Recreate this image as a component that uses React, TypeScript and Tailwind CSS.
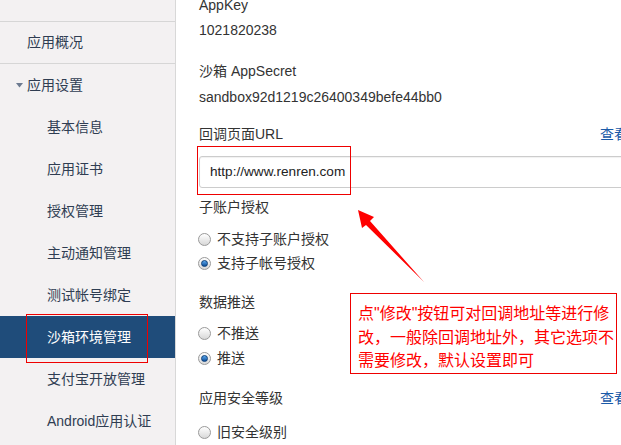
import React from "react";

const font = "font-['Liberation_Sans','Noto_Sans_CJK_SC',sans-serif]";

type NavItem = { label: string; sub?: boolean; active?: boolean; arrow?: boolean };

const navItems: NavItem[] = [
  { label: "应用设置", arrow: true },
  { label: "基本信息", sub: true },
  { label: "应用证书", sub: true },
  { label: "授权管理", sub: true },
  { label: "主动通知管理", sub: true },
  { label: "测试帐号绑定", sub: true },
  { label: "沙箱环境管理", sub: true, active: true },
  { label: "支付宝开放管理", sub: true },
  { label: "Android应用认证", sub: true },
];

function Radio({ checked, label }: { checked?: boolean; label: string }) {
  return (
    <div className="flex items-center h-5">
      <span className="ml-[-1px] w-[13px] h-[13px] rounded-full border border-[#9a9a9a] bg-gradient-to-b from-[#ffffff] to-[#d8d8d8] flex items-center justify-center">
        {checked && (
          <span className="w-[7px] h-[7px] rounded-full bg-gradient-to-b from-[#5aa8ee] to-[#0c4f9a] border border-[#0a3d78]" />
        )}
      </span>
      <span className="ml-[6px] text-[14px] text-[#333]">{label}</span>
    </div>
  );
}

export default function App() {
  return (
    <div className={`relative w-[621px] h-[445px] overflow-hidden bg-white flex ${font}`}>
      {/* sidebar */}
      <div className="w-[176px] shrink-0 bg-[#f3f1f2] border-r border-[#d8d8d8] text-[14px] text-[#2f3d52]">
        <div className="h-[22px] border-b border-[#d6d6d6]" />
        <div className="h-[42px] border-b border-[#d6d6d6] flex items-center pl-[27px]">应用概况</div>
        {navItems.map((item) => (
          <div
            key={item.label}
            className={`h-[42px] flex items-center ${item.sub ? "pl-[47px]" : "pl-[16px]"} ${
              item.active ? "bg-[#1f4c7a] text-white" : ""
            }`}
          >
            {item.arrow && (
              <svg width="8" height="5" viewBox="0 0 8 5" className="mr-[3px] mt-[1px]">
                <path d="M0 0h7L3.5 4.5z" fill="#6c7a90" />
              </svg>
            )}
            {item.label}
          </div>
        ))}
      </div>

      {/* main */}
      <div className="pl-[23px] w-[470px] shrink-0 text-[14px] text-[#333] mt-[-5px]">
        <div className="leading-5">AppKey</div>
        <div className="leading-5 mt-[5px]">1021820238</div>
        <div className="leading-5 mt-[21px]">沙箱 AppSecret</div>
        <div className="leading-5 mt-[6px]">sandbox92d1219c26400349befe44bb0</div>

        <div className="leading-5 mt-[17px] w-[429px] flex justify-between">
          <span>回调页面URL</span>
          <span className="text-[#1a5aa8]">查看</span>
        </div>
        <div className="mt-[12px] h-[32px] w-[440px] border border-[#cccccc] rounded-[3px] shadow-[inset_0_1px_1px_rgba(0,0,0,0.06)] flex items-center pl-[10px] text-[13.6px] text-[#222]">
          http://www.renren.com
        </div>

        <div className="leading-5 mt-[9px]">子账户授权</div>
        <div className="mt-[12px]">
          <Radio label="不支持子账户授权" />
        </div>
        <div className="mt-[4px]">
          <Radio checked label="支持子帐号授权" />
        </div>

        <div className="leading-5 mt-[19px]">数据推送</div>
        <div className="mt-[11px]">
          <Radio label="不推送" />
        </div>
        <div className="mt-[5px]">
          <Radio checked label="推送" />
        </div>

        <div className="leading-5 mt-[20px] w-[429px] flex justify-between">
          <span>应用安全等级</span>
          <span className="text-[#1a5aa8]">查看</span>
        </div>
        <div className="mt-[14px]">
          <Radio label="旧安全级别" />
        </div>
      </div>

      {/* annotations */}
      <div className="absolute left-[26px] top-[314px] w-[122px] h-[49px] border border-[#ee0000]" />
      <div className="absolute left-[197px] top-[146px] w-[154px] h-[49px] border border-[#ee0000]" />
      <div className="absolute left-[350px] top-[293px] w-[267px] h-[81px] border border-[#ee0000] pl-[7px] pt-[8px] text-[16px] leading-[23.5px] text-[#ff0000] whitespace-nowrap">
        <div>点"修改"按钮可对回调地址等进行修</div>
        <div>改，一般除回调地址外，其它选项不</div>
        <div>需要修改，默认设置即可</div>
      </div>
      <svg className="absolute left-0 top-0 pointer-events-none" width="621" height="445">
        <polygon points="358,210 374,217 370,221 424,282 366,225 362,228" fill="#ff0000" />
      </svg>
    </div>
  );
}
